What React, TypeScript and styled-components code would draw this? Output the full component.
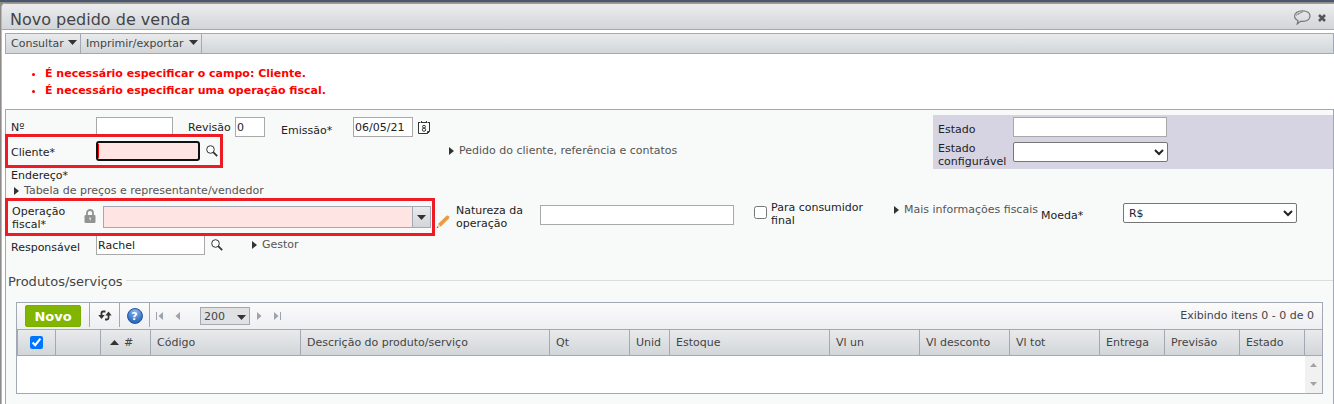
import React from "react";
import styled, { createGlobalStyle } from "styled-components";

const line = "#a3a9b4";

const GlobalStyle = createGlobalStyle`
  * { box-sizing: border-box; }
  body {
    margin: 0;
    background: #8b8b8b;
    font: 11px/13px "DejaVu Sans", Verdana, sans-serif;
    color: #222;
  }
  input, select, button { font: inherit; color: inherit; }
`;

const Desktop = styled.div`
  min-height: 100vh;
  display: flex;
  padding: 3px 0 0 1px;
  background: linear-gradient(#47586f, #47586f) top / 100% 2px no-repeat, linear-gradient(#8f8a86, #8b8b8b);
`;
const Window = styled.main`
  flex: 1;
  min-width: 0;
  display: flex;
  flex-direction: column;
  background: #fff;
  border-left: 1px solid #b8b8b8;
  border-radius: 5px 0 0 0;
  overflow: hidden;
`;
const TitleBar = styled.header`
  display: flex;
  align-items: center;
  justify-content: space-between;
  height: 27px;
  padding: 2px 8px 0 8px;
  border-top: 1px solid #a29c94;
  border-bottom: 1px solid ${line};
  background: linear-gradient(#ebecee, #d2d6d9);
`;
const Title = styled.h1`
  margin: 0;
  padding-top: 4px;
  font-size: 16px;
  line-height: 20px;
  font-weight: normal;
  color: #444;
`;
const Actions = styled.div`
  display: flex;
  align-items: center;
  gap: 7px;
`;
const IconButton = styled.button`
  display: flex;
  padding: 0;
  border: 0;
  background: none;
  cursor: pointer;
`;
const Content = styled.div`
  flex: 1;
  display: flex;
  flex-direction: column;
  padding: 3px 0 0 3px;
`;
const MenuBar = styled.nav`
  display: flex;
  height: 21px;
  border: 1px solid ${line};
  background: linear-gradient(#e9eaec, #d2d6d9);
`;
const MenuButton = styled.button<{ $width: number }>`
  display: flex;
  justify-content: space-between;
  width: ${(p) => p.$width}px;
  padding: 3px 3px 0 5px;
  border: 0;
  border-right: 1px solid ${line};
  background: none;
  color: #444;
  svg { margin-top: 3px; }
`;
const Errors = styled.ul`
  margin: 0;
  padding: 11px 0 10px 40px;
  line-height: 17px;
  font-weight: bold;
  color: #f00;
`;
const Panel = styled.form`
  flex: 1;
  border: 1px solid ${line};
  border-bottom: 0;
  background: #f8faf9;
  padding-top: 5px;
`;
const TopArea = styled.div`
  display: flex;
  align-items: flex-start;
`;
const TopFields = styled.div`
  flex: 1;
  padding: 2px 0 0 2px;
`;
const StatusBox = styled.div`
  flex: none;
  width: 400px;
  display: grid;
  grid-template-columns: 75px 155px;
  row-gap: 5px;
  align-items: start;
  padding: 2px 5px 1px;
  background: #d6d4e2;
`;
const Row = styled.div`
  display: flex;
  align-items: flex-start;
`;
const Highlight = styled.div<{ $width: number; $height: number }>`
  position: relative;
  display: flex;
  flex: none;
  align-items: flex-start;
  width: ${(p) => p.$width}px;
  height: ${(p) => p.$height}px;
  outline: 3px solid #ed1c24;
`;
const Label = styled.label<{ $width?: number; $top?: number }>`
  flex: none;
  width: ${(p) => (p.$width ? p.$width + "px" : "auto")};
  padding-top: ${(p) => p.$top ?? 4}px;
`;
const Box = styled.input<{ $width: number }>`
  flex: none;
  width: ${(p) => p.$width}px;
  height: 20px;
  padding: 0 1px;
  border: 1px solid #a9a9a9;
  border-radius: 0;
  outline: 0;
  background: #fff;
`;
const ClientBox = styled(Box)`
  border: 2px solid #111;
  border-radius: 3px;
  background: linear-gradient(#f00, #f00) 0 1px / 1px 14px no-repeat #ffe4e4;
`;
const Select = styled.select<{ $width: number }>`
  flex: none;
  width: ${(p) => p.$width}px;
  height: 20px;
  padding: 0 0 0 1px;
  border: 1px solid #767676;
  border-radius: 2px;
  background: #fff;
`;
const Disclosure = styled.button`
  display: flex;
  align-items: center;
  gap: 5px;
  padding: 0;
  border: 0;
  background: none;
  color: #555;
  white-space: nowrap;
`;
const Combo = styled.div`
  display: flex;
  flex: 1;
  height: 22px;
  margin: 5px 1px 0 7px;
  border: 1px solid ${line};
`;
const ComboInput = styled.input`
  flex: 1;
  min-width: 0;
  border: 0;
  outline: 0;
  background: #ffe4e4;
`;
const ComboButton = styled.button`
  display: grid;
  place-items: center;
  width: 18px;
  padding: 0;
  border: 0;
  border-left: 1px solid ${line};
  background: linear-gradient(#e9eaec, #d2d6d9);
`;
const Slot = styled.div<{ $left: number; $top?: number }>`
  display: flex;
  align-items: flex-start;
  flex: none;
  margin-left: ${(p) => p.$left}px;
  padding-top: ${(p) => p.$top ?? 0}px;
`;
const Check = styled.input`
  width: 13px;
  height: 13px;
  margin: 0;
`;
const Legend = styled.h2`
  display: flex;
  align-items: center;
  gap: 3px;
  margin: 19px 0 0;
  padding-left: 2px;
  font-size: 13px;
  line-height: 16px;
  font-weight: normal;
  color: #444;
  &::after { content: ""; flex: 1; margin-bottom: 4px; border-top: 1px solid #dadddc; }
`;
const GridBox = styled.div`
  margin: 12px 10px 0;
  border: 1px solid ${line};
  background: #fff;
`;
const GridBar = styled.div`
  display: flex;
  height: 27px;
  padding-left: 8px;
  border-bottom: 1px solid ${line};
  background: linear-gradient(#fbfbfc, #eeeff1);
  color: #444;
`;
const NewButton = styled.button`
  width: 56px;
  height: 22px;
  margin: 2px 8px 0 0;
  padding: 0;
  border: 1px solid #79ad02;
  border-radius: 2px;
  background: #80b602;
  color: #fff;
  font-size: 13px;
  font-weight: bold;
`;
const BarCell = styled.div`
  display: grid;
  place-items: center;
  width: 30px;
  height: 24px;
  padding-top: 2px;
  border-left: 1px solid ${line};
`;
const Pager = styled.div`
  display: flex;
  align-items: center;
  height: 24px;
  padding: 2px 0 0 6px;
  border-left: 1px solid ${line};
`;
const PageButton = styled(IconButton)<{ $after: number }>`
  margin-right: ${(p) => p.$after}px;
`;
const PageSize = styled.div`
  position: relative;
  margin-right: 7px;
  svg { position: absolute; right: 4px; top: 8px; pointer-events: none; }
`;
const SizeSelect = styled.select`
  display: block;
  appearance: none;
  width: 50px;
  height: 18px;
  padding: 0 3px;
  border: 1px solid ${line};
  border-radius: 0;
  background: #dfe1e3;
`;
const Summary = styled.span`
  margin: 6px 8px 0 auto;
`;
const Table = styled.table`
  width: 100%;
  table-layout: fixed;
  border-spacing: 0;
  color: #444;
  th {
    height: 26px;
    padding: 0 0 1px 6px;
    border-right: 1px solid ${line};
    border-bottom: 1px solid ${line};
    background: linear-gradient(#e9eaec, #d2d6d9);
    font-weight: normal;
    text-align: left;
    white-space: nowrap;
  }
  th:first-child { padding: 0; border-left: 1px solid ${line}; }
  th:first-child input { display: block; margin: 0 auto; }
  th:last-child { border-right: 0; }
  td { height: 37px; padding: 0; }
`;
const SortMark = styled.svg`
  margin: 0 5px 1px 3px;
`;
const ScrollCell = styled.td`
  background: #f1f1f1;
  svg { display: block; margin: 0 auto; }
`;
const HelpIcon = styled.span`
  display: grid;
  place-items: center;
  width: 16px;
  height: 16px;
  border: 1px solid #1f55a5;
  border-radius: 50%;
  background: radial-gradient(circle at 50% 20%, #8fb6ea, #2e6bc0 75%);
  color: #fff;
  font-weight: bold;
`;

const Down = () => (
  <svg width="9" height="5" viewBox="0 0 9 5"><path d="M0 0H9L4.5 5Z" fill="#333" /></svg>
);
const Right = () => (
  <svg width="5" height="8" viewBox="0 0 5 8"><path d="M0 0L5 4L0 8Z" fill="#333" /></svg>
);
const Search = () => (
  <svg width="12" height="12" viewBox="0 0 12 12" fill="none" stroke="#333">
    <circle cx="4.5" cy="4.5" r="3.8" fill="#fff" strokeWidth="1" />
    <path d="M7.2 7.2L11.2 11.2" strokeWidth="1.8" />
  </svg>
);
const Calendar = () => (
  <svg width="12" height="13" viewBox="0 0 12 13" fill="none" stroke="#333">
    <path d="M.5 1.5V12.5H9.5L11.5 10.5V1.5" fill="#fff" />
    <path d="M0 1.5H2.5M4 1.5H8M9.5 1.5H12M9.5 12.5V10.5H11.5M3.5 0V2M8.5 0V2" />
    <ellipse cx="6" cy="5.7" rx="1.5" ry="1.3" />
    <ellipse cx="6" cy="8.7" rx="1.7" ry="1.6" />
  </svg>
);
const Lock = () => (
  <svg width="12" height="14" viewBox="0 0 12 14">
    <path d="M3 7V4a3 3 0 0 1 6 0V7" fill="none" stroke="#929292" strokeWidth="1.8" />
    <rect x=".5" y="6" width="11" height="8" rx="1" fill="#929292" />
    <path d="M5.3 8.5H6.7V11.5H5.8V10H5.3Z" fill="#eee" />
  </svg>
);
const Pencil = () => (
  <svg width="14" height="14" viewBox="0 0 14 14">
    <path d="M2 9L10.5 .8Q11.5 0 12.8 1.2Q13.8 2.2 12.9 3.4L4.7 11.8Z" fill="#eb9b43" />
    <path d="M2 9L4.7 11.8L.8 13Z" fill="#ecd5b0" />
    <path d="M.5 13.2L1.2 11.4L2.4 12.6Z" fill="#555" />
  </svg>
);
const Balloon = () => (
  <svg width="17" height="15" viewBox="0 0 17 15" fill="none" stroke="#777">
    <path d="M4 10.5C1.5 9.5 .6 8 .6 6C.6 3 4 .8 8.5 .8S16 3 16 6S13 11.2 8.500 11.400H6.500L3.200 14L4 10.500Z" strokeWidth="1.2" />
    <path d="M2.5 5.5C3 4 4 3.5 5 3.2M4.5 4.5C5.5 3 7 2.5 8.5 2.3" />
  </svg>
);
const Close = () => (
  <svg width="8" height="8" viewBox="0 0 8 8"><path d="M1 1L7 7M7 1L1 7" stroke="#555" strokeWidth="2.5" /></svg>
);
const Refresh = () => (
  <svg width="14" height="12" viewBox="0 0 14 12">
    <path d="M7.5 1.5H5Q3.5 1.5 3.5 3V6M7 9.5H9Q10.5 9.5 10.5 8V5" fill="none" stroke="#333" strokeWidth="1.8" />
    <path d="M.3 5H6.7L3.5 9Z M7.3 5.5H13.7L10.5 1.5Z" fill="#333" />
  </svg>
);
const PageArrow = ({ flip = false, bar = false }) => {
  const w = bar ? 7 : 5;
  return (
    <svg width={w} height="8" viewBox={`0 0 ${w} 8`}>
      <g transform={flip ? `translate(${w} 0) scale(-1 1)` : undefined}>
        <path d={bar ? "M7 0V8L2.5 4Z" : "M5 0V8L.5 4Z"} fill="#9da3ac" />
        {bar && <path d="M.5 0V8" stroke="#9da3ac" />}
      </g>
    </svg>
  );
};

const columns: [string, number | undefined][] = [
  ["Código", 150], ["Descrição do produto/serviço", undefined], ["Qt", 80], ["Unid", 40],
  ["Estoque", 160], ["Vl un", 90], ["Vl desconto", 90], ["Vl tot", 90],
  ["Entrega", 65], ["Previsão", 75], ["Estado", 65],
];

export default function App() {
  return (
    <>
      <GlobalStyle />
      <Desktop>
        <Window>
          <TitleBar>
            <Title>Novo pedido de venda</Title>
            <Actions>
              <IconButton aria-label="Comentários"><Balloon /></IconButton>
              <IconButton aria-label="Fechar"><Close /></IconButton>
            </Actions>
          </TitleBar>
          <Content>
            <MenuBar>
              <MenuButton $width={75}>Consultar<Down /></MenuButton>
              <MenuButton $width={121}>Imprimir/exportar<Down /></MenuButton>
            </MenuBar>
            <Errors>
              <li>É necessário especificar o campo: Cliente.</li>
              <li>É necessário especificar uma operação fiscal.</li>
            </Errors>
            <Panel onSubmit={(e) => e.preventDefault()}>
              <TopArea>
                <TopFields>
                  <Row>
                    <Slot $left={3}>
                      <Label htmlFor="numero" $width={85}>Nº</Label>
                      <Box id="numero" $width={77} />
                    </Slot>
                    <Slot $left={15}>
                      <Label htmlFor="revisao" $width={47}>Revisão</Label>
                      <Box id="revisao" $width={30} defaultValue="0" />
                    </Slot>
                    <Slot $left={16}>
                      <Label htmlFor="emissao" $width={72} $top={7}>Emissão*</Label>
                      <Box id="emissao" $width={60} defaultValue="06/05/21" />
                    </Slot>
                    <Slot $left={5} $top={4}>
                      <IconButton type="button" aria-label="Calendário"><Calendar /></IconButton>
                    </Slot>
                  </Row>
                  <Row>
                    <Highlight $width={212} $height={28}>
                      <Slot $left={3} $top={4}>
                        <Label htmlFor="cliente" $width={85} $top={5}>Cliente*</Label>
                        <ClientBox id="cliente" $width={104} />
                      </Slot>
                      <Slot $left={6} $top={8}>
                        <IconButton type="button" aria-label="Buscar cliente"><Search /></IconButton>
                      </Slot>
                    </Highlight>
                    <Slot $left={229} $top={7}>
                      <Disclosure type="button"><Right />Pedido do cliente, referência e contatos</Disclosure>
                    </Slot>
                  </Row>
                </TopFields>
                <StatusBox>
                  <Label htmlFor="estado" $top={6}>Estado</Label>
                  <Box id="estado" $width={154} />
                  <Label htmlFor="configuravel" $top={0}>Estado configurável</Label>
                  <Select id="configuravel" $width={155} />
                </StatusBox>
              </TopArea>
              <Slot $left={5}><Label as="span" $top={0}>Endereço*</Label></Slot>
              <Slot $left={8} $top={2}>
                <Disclosure type="button"><Right />Tabela de preços e representante/vendedor</Disclosure>
              </Slot>
              <Slot $left={2} $top={4}>
                <Highlight $width={424} $height={32}>
                  <Slot $left={4} $top={4}>
                    <Label htmlFor="operacao" $width={72} $top={0}>Operação fiscal*</Label>
                  </Slot>
                  <Slot $left={0} $top={8}><Lock /></Slot>
                  <Combo>
                    <ComboInput id="operacao" />
                    <ComboButton type="button" aria-label="Abrir lista"><Down /></ComboButton>
                  </Combo>
                </Highlight>
                <Slot $left={4} $top={14}>
                  <IconButton type="button" aria-label="Editar"><Pencil /></IconButton>
                </Slot>
                <Slot $left={6} $top={3}>
                  <Label htmlFor="natureza" $width={84} $top={0}>Natureza da<br />operação</Label>
                </Slot>
                <Slot $left={0} $top={4}><Box id="natureza" $width={194} /></Slot>
                <Slot $left={20} $top={5}><Check id="final" type="checkbox" /></Slot>
                <Slot $left={4}><Label htmlFor="final" $width={123} $top={0}>Para consumidor<br />final</Label></Slot>
                <Slot $left={0} $top={2}>
                  <Disclosure type="button"><Right />Mais informações fiscais</Disclosure>
                </Slot>
                <Slot $left={3} $top={2}>
                  <Label htmlFor="moeda" $width={82} $top={6}>Moeda*</Label>
                  <Select id="moeda" $width={174}><option>R$</option></Select>
                </Slot>
              </Slot>
              <Slot $left={5} $top={2}>
                <Label htmlFor="responsavel" $width={85} $top={6}>Responsável</Label>
                <Box id="responsavel" $width={109} defaultValue="Rachel" />
                <Slot $left={6} $top={4}>
                  <IconButton type="button" aria-label="Buscar responsável"><Search /></IconButton>
                </Slot>
                <Slot $left={29} $top={3}>
                  <Disclosure type="button"><Right />Gestor</Disclosure>
                </Slot>
              </Slot>
              <Legend>Produtos/serviços</Legend>
              <GridBox>
                <GridBar>
                  <NewButton type="button">Novo</NewButton>
                  <BarCell><IconButton type="button" aria-label="Atualizar"><Refresh /></IconButton></BarCell>
                  <BarCell><IconButton type="button" aria-label="Ajuda"><HelpIcon>?</HelpIcon></IconButton></BarCell>
                  <Pager>
                    <PageButton type="button" aria-label="Primeira página" $after={12}><PageArrow bar /></PageButton>
                    <PageButton type="button" aria-label="Página anterior" $after={20}><PageArrow /></PageButton>
                    <PageSize>
                      <SizeSelect aria-label="Itens por página"><option>200</option></SizeSelect>
                      <Down />
                    </PageSize>
                    <PageButton type="button" aria-label="Próxima página" $after={12}><PageArrow flip /></PageButton>
                    <PageButton type="button" aria-label="Última página" $after={0}><PageArrow flip bar /></PageButton>
                  </Pager>
                  <Summary>Exibindo itens 0 - 0 de 0</Summary>
                </GridBar>
                <Table>
                  <colgroup>
                    <col width={39} /><col width={45} /><col width={50} />
                    {columns.map(([name, width]) => <col key={name} width={width} />)}
                    <col width={17} />
                  </colgroup>
                  <thead>
                    <tr>
                      <th><Check type="checkbox" defaultChecked aria-label="Selecionar todos" /></th>
                      <th />
                      <th><SortMark width="9" height="5" viewBox="0 0 9 5"><path d="M0 5H9L4.5 0Z" fill="#333" /></SortMark>#</th>
                      {columns.map(([name]) => <th key={name}>{name}</th>)}
                      <th />
                    </tr>
                  </thead>
                  <tbody>
                    <tr>
                      <td colSpan={14} />
                      <ScrollCell>
                        <svg width="7" height="23" viewBox="0 0 7 23">
                          <path d="M0 4H7L3.5 0Z M0 19H7L3.5 23Z" fill="#a3a3a3" />
                        </svg>
                      </ScrollCell>
                    </tr>
                  </tbody>
                </Table>
              </GridBox>
            </Panel>
          </Content>
        </Window>
      </Desktop>
    </>
  );
}
